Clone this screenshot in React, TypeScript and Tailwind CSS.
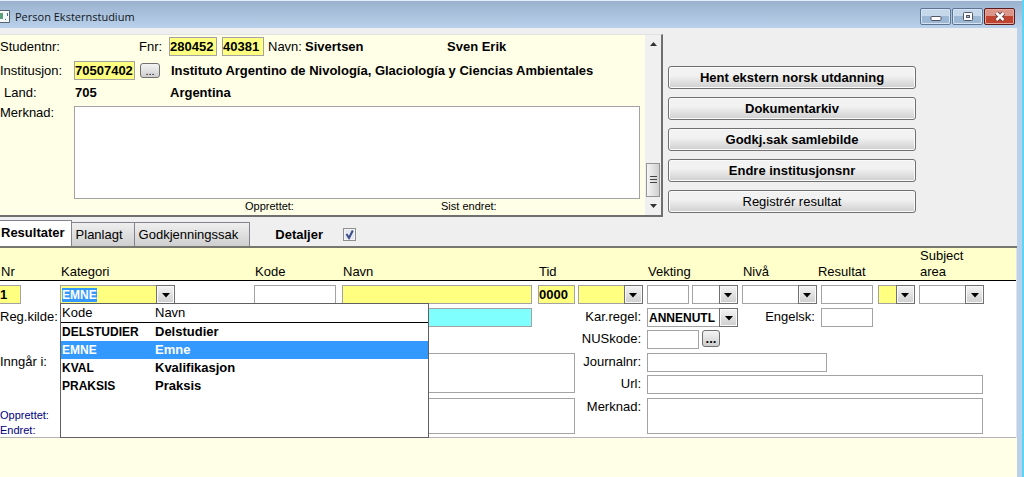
import React, { useEffect, useRef, useState } from 'react';
import { clsx } from 'clsx';

const ACTIONS = [
  { label: 'Hent ekstern norsk utdanning', bold: true },
  { label: 'Dokumentarkiv', bold: true },
  { label: 'Godkj.sak samlebilde', bold: true },
  { label: 'Endre institusjonsnr', bold: true },
  { label: 'Registrér resultat', bold: false },
];

const KATEGORIER = [
  { kode: 'DELSTUDIER', navn: 'Delstudier' },
  { kode: 'EMNE', navn: 'Emne' },
  { kode: 'KVAL', navn: 'Kvalifikasjon' },
  { kode: 'PRAKSIS', navn: 'Praksis' },
];

const TABS = ['Resultater', 'Planlagt', 'Godkjenningssak'];

const FIELD = 'block h-[19px] border border-[#a3a3a3] p-0 outline-none';

interface FieldProps extends React.InputHTMLAttributes<HTMLInputElement> {
  label: string;
}

const Field: React.FC<FieldProps> = ({ label, className, ...rest }) => (
  <input aria-label={label} className={clsx(FIELD, className)} {...rest} />
);

const Arrow = () => (
  <svg width="8" height="5" viewBox="0 0 8 5" className="mt-px">
    <path d="M0 0h8L4 4.5z" fill="#000" />
  </svg>
);

const ARROW_BOX =
  'flex h-[19px] w-[19px] shrink-0 items-center justify-center border border-[#707070] bg-linear-to-b from-[#f4f4f4] to-[#cfcfcf] shadow-[inset_0_0_0_1px_#fafafa]';

interface PickerProps {
  id?: string;
  label: string;
  value?: string;
  className?: string;
}

// Closed drop-down with the classic square arrow box
const Picker: React.FC<PickerProps> = ({ id, label, value = '', className }) => (
  <div className={clsx('relative flex', className)}>
    <select
      id={id}
      aria-label={label}
      defaultValue={value}
      className="h-[19px] min-w-0 flex-1 appearance-none border border-r-0 border-[#a3a3a3] py-0 pl-px text-xs leading-4 font-bold outline-none"
    >
      <option value={value}>{value}</option>
    </select>
    <span className={clsx(ARROW_BOX, 'pointer-events-none')}>
      <Arrow />
    </span>
  </div>
);

const DotsButton = ({ label, bold }: { label: string; bold?: boolean }) => (
  <button
    aria-label={label}
    className={clsx(
      'flex items-center justify-center rounded-[3px] border border-[#707070] bg-linear-to-b from-[#f4f4f4] to-[#cfcfcf] leading-3',
      bold ? 'h-[17px] w-[18px] font-bold' : 'h-[15px] w-5 text-[11px]'
    )}
  >
    ...
  </button>
);

const TitleBar = () => (
  <header className="flex h-7 shrink-0 items-center justify-between border-t border-[#e4eef8] bg-linear-to-b from-[#9ab2ce] to-[#b9d1ea] pt-1 pr-[7px]">
    <div className="flex items-center gap-[5px]">
      <svg width="10" height="13" viewBox="0 0 10 13">
        <path d="M0 .5h9.5v12H0" fill="#f4f8f8" stroke="#56646e" />
        <path d="M0 3h3v6H0z" fill="#5aa07c" />
        <path d="M5 9.500h1M7.500 3v3" stroke="#3f6f9a" />
      </svg>
      <h1 className="font-['Open_Sans','Noto_Sans',sans-serif] text-[11px] text-[#10161e]">Person Eksternstudium</h1>
    </div>
    <div className="flex gap-px">
      <button
        aria-label="Minimer"
        className="flex h-[17px] w-[31px] items-center justify-center rounded-[2px] border border-[#5b7593] bg-linear-to-b from-[#c5d7ea] from-50% to-[#9db8d5] to-50% shadow-[inset_0_0_0_1px_#d5e3f2]"
      >
        <svg width="12" height="11" viewBox="0 0 12 11">
          <rect x="1" y="5.500" width="10" height="4" rx="1" fill="#fff" stroke="#535666" />
        </svg>
      </button>
      <button
        aria-label="Maksimer"
        className="flex h-[17px] w-[31px] items-center justify-center rounded-[2px] border border-[#5b7593] bg-linear-to-b from-[#c5d7ea] from-50% to-[#9db8d5] to-50% shadow-[inset_0_0_0_1px_#d5e3f2]"
      >
        <svg width="12" height="11" viewBox="0 0 12 11">
          <rect x="1.500" y="1.500" width="9" height="8" rx="1" fill="#fff" stroke="#535666" />
          <rect x="4.500" y="4.500" width="3" height="2" fill="#a9c0da" stroke="#535666" />
        </svg>
      </button>
      <button
        aria-label="Lukk"
        className="flex h-[17px] w-[31px] items-center justify-center rounded-[2px] border border-[#5c1a1a] bg-linear-to-b from-[#dc9488] from-50% to-[#c0432f] to-50% shadow-[inset_0_0_0_1px_#e6a79c]"
      >
        <svg width="12" height="11" viewBox="0 0 12 11">
          <path d="M2.500 2l7 7M9.500 2l-7 7" stroke="#5b3a44" strokeWidth="4.500" />
          <path d="M2.500 2l7 7M9.500 2l-7 7" stroke="#fff" strokeWidth="2.500" />
        </svg>
      </button>
    </div>
  </header>
);

const Scrollbar = () => (
  <div className="flex w-4 shrink-0 flex-col items-center bg-[#f0f0f0] py-[7px]" aria-hidden="true">
    <svg width="7" height="4" viewBox="0 0 7 4">
      <path d="M0 4L3.500 0 7 4z" fill="#333" />
    </svg>
    <div className="mt-auto mb-[7px] flex h-[34px] w-[14px] items-center justify-center border border-[#959595] bg-linear-to-r from-[#f5f5f5] to-[#cfcfcf]">
      <svg width="7" height="8" viewBox="0 0 7 8">
        <path d="M0 .5h7M0 3.500h7M0 6.500h7" stroke="#444" />
      </svg>
    </div>
    <svg width="7" height="4" viewBox="0 0 7 4">
      <path d="M0 0h7L3.500 4z" fill="#333" />
    </svg>
  </div>
);

const PersonPanel = () => (
  <section className="flex h-[183px] w-[663px] shrink-0 border-t border-r-2 border-b-2 border-t-[#e2e2e2] border-r-[#6f6f6f] border-b-[#6f6f6f] bg-[#ffffe8]">
    <div className="flex min-w-0 flex-1 flex-col pt-[2px]">
      <div className="flex h-[19px] items-center">
        <span className="w-[139px]">Studentnr:</span>
        <label htmlFor="fnr" className="w-[30px]">Fnr:</label>
        <input id="fnr" defaultValue="280452" className={clsx(FIELD, 'mr-[5px] w-12 bg-[#ffff80] font-bold')} />
        <Field label="Personnr" defaultValue="40381" className="mr-1 w-[42px] bg-[#ffff80] font-bold" />
        <span className="w-[37px]">Navn:</span>
        <b className="w-[142px]">Sivertsen</b>
        <b>Sven Erik</b>
      </div>
      <div className="mt-[5px] flex h-[19px] items-center">
        <label htmlFor="institusjon" className="w-[74px]">Institusjon:</label>
        <input id="institusjon" defaultValue="70507402" className={clsx(FIELD, 'mr-[5px] w-[61px] bg-[#ffff80] font-bold')} />
        <DotsButton label="Velg institusjon" />
        <b className="ml-[11px] truncate">Instituto Argentino de Nivología, Glaciología y Ciencias Ambientales</b>
      </div>
      <div className="mt-1 flex h-[18px] items-center">
        <span className="w-[75px] pl-1">Land:</span>
        <b className="w-[95px]">705</b>
        <b>Argentina</b>
      </div>
      <div className="mt-1 flex">
        <label htmlFor="merknad" className="w-[74px] leading-[14px]">Merknad:</label>
        <textarea id="merknad" className="mr-[5px] block h-[93px] min-w-0 flex-1 resize-none border border-[#a3a3a3] bg-white outline-none" />
      </div>
      <div className="flex text-[11px] leading-[14px]">
        <span className="ml-[245px] w-[196px]">Opprettet:</span>
        <span>Sist endret:</span>
      </div>
    </div>
    <Scrollbar />
  </section>
);

const TabBar = () => {
  const [active, setActive] = useState('Resultater');
  return (
    <div className="flex items-end border-b-2 border-[#77776f]">
      <div role="tablist" className="flex items-end">
        {TABS.map((tab) => (
          <button
            key={tab}
            role="tab"
            aria-selected={tab === active}
            onClick={() => setActive(tab)}
            className={clsx(
              'border-t border-r border-[#84848c]',
              tab === active
                ? 'h-[26px] bg-white pr-[6px] pb-[2px] pl-px font-bold'
                : 'h-6 bg-linear-to-b from-[#efefef] to-[#cfcfcf] pr-[11px] pl-1'
            )}
          >
            {tab}
          </button>
        ))}
      </div>
      <label htmlFor="detaljer" className="ml-[25px] h-5 font-bold">Detaljer</label>
      <span className="relative mb-[5px] ml-5 h-[13px] w-[13px]">
        <input
          id="detaljer"
          type="checkbox"
          defaultChecked
          className="peer block h-[13px] w-[13px] appearance-none border border-[#8e8f8f] bg-[#e3e8f0] shadow-[inset_0_0_0_1px_#f4f4f4]"
        />
        <svg viewBox="0 0 13 13" className="pointer-events-none absolute inset-0 hidden peer-checked:block">
          <path d="M3.500 6l2.500 4L9.800 2.500" fill="none" stroke="#3a4b86" strokeWidth="2" />
        </svg>
      </span>
    </div>
  );
};

const KategoriBox = () => {
  const input = useRef<HTMLInputElement>(null);
  const [selected, setSelected] = useState('EMNE');

  useEffect(() => {
    input.current?.focus();
    input.current?.select();
  }, []);

  return (
    <div className="relative flex">
      <input
        ref={input}
        role="combobox"
        aria-label="Kategori"
        aria-expanded="true"
        aria-controls="kategorier"
        value={selected}
        onChange={(e) => setSelected(e.target.value)}
        className="block h-[19px] w-24 border border-r-0 border-[#a3a3a3] bg-[#ffff80] p-0 pl-px text-xs leading-4 font-bold outline-none selection:bg-[#3399ff] selection:text-white"
      />
      <button aria-label="Vis kategorier" className={ARROW_BOX}>
        <Arrow />
      </button>
      <div className="absolute top-[18px] left-0 z-10 h-[135px] w-[369px] border border-[#606060] bg-white">
        <div className="flex h-[19px] border-b border-black pl-px text-[13px] leading-[18px]">
          <span className="w-[93px]">Kode</span>
          <span>Navn</span>
        </div>
        <ul id="kategorier" role="listbox" aria-label="Kategorier">
          {KATEGORIER.map(({ kode, navn }) => (
            <li
              key={kode}
              role="option"
              aria-selected={kode === selected}
              onClick={() => setSelected(kode)}
              className={clsx(
                'flex h-[18px] items-center pl-px font-bold',
                kode === selected && 'bg-[#3399ff] text-white'
              )}
            >
              <span className="w-[93px] text-xs">{kode}</span>
              <span>{navn}</span>
            </li>
          ))}
        </ul>
      </div>
    </div>
  );
};

const ResultTable = () => (
  <table className="w-full table-fixed border-collapse text-left">
    <colgroup>
      <col className="w-[60px]" />
      <col className="w-[194px]" />
      <col className="w-[88px]" />
      <col />
      <col className="w-10" />
      <col className="w-[69px]" />
      <col className="w-[45px]" />
      <col className="w-[50px]" />
      <col className="w-[79px]" />
      <col className="w-[57px]" />
      <col className="w-[41px]" />
      <col className="w-[97px]" />
    </colgroup>
    <thead>
      <tr className="border-b border-black bg-[#ffffcc] align-bottom leading-4 [&>th]:p-0 [&>th]:pl-px [&>th]:font-normal">
        <th>Nr</th>
        <th>Kategori</th>
        <th>Kode</th>
        <th>Navn</th>
        <th colSpan={2}>Tid</th>
        <th colSpan={2}>Vekting</th>
        <th>Nivå</th>
        <th colSpan={2}><span className="-ml-1">Resultat</span></th>
        <th>Subject<br />area</th>
      </tr>
    </thead>
    <tbody>
      <tr className="align-top [&>td]:p-0 [&>td]:pt-1">
        <td><Field label="Nr" defaultValue="1" className="w-[21px] border-l-0 bg-[#ffff80] font-bold" /></td>
        <td><KategoriBox /></td>
        <td><Field label="Kode" className="w-[82px]" /></td>
        <td><Field label="Navn" className="w-[calc(100%-6px)] bg-[#ffff80]" /></td>
        <td><Field label="Tid" defaultValue="0000" className="w-[37px] bg-[#ffff80] font-bold" /></td>
        <td><Picker label="Termin" className="w-[65px] bg-[#ffff80]" /></td>
        <td><Field label="Vekting" className="w-[42px]" /></td>
        <td><Picker label="Vektingstype" className="w-[46px]" /></td>
        <td><Picker label="Nivå" className="w-[75px]" /></td>
        <td><Field label="Resultat" className="w-[52px]" /></td>
        <td><Picker label="Resultattype" className="w-[37px] bg-[#ffff80]" /></td>
        <td><Picker label="Subject area" className="w-[65px]" /></td>
      </tr>
    </tbody>
  </table>
);

const Details = () => (
  <div className="flex border-b border-[#b4b4b4] pt-1 pb-[3px]">
    <div className="grid min-w-0 flex-1 grid-cols-[60px_1fr] grid-rows-[45px_45px_36px]">
      <label htmlFor="regkilde">Reg.kilde:</label>
      <input id="regkilde" className={clsx(FIELD, 'w-[calc(100%-43px)] bg-[#80ffff]')} />
      <label htmlFor="inngar">Inngår i:</label>
      <textarea id="inngar" className="block h-10 resize-none border border-[#a3a3a3] outline-none" />
      <div className="pt-[10px] text-[11px] leading-[15px] text-[#000080]">
        <p>Opprettet:</p>
        <p>Endret:</p>
      </div>
      <textarea aria-label="Tillegg" className="block h-9 resize-none border border-[#a3a3a3] outline-none" />
    </div>
    <div className="grid w-[441px] shrink-0 grid-cols-[72px_1fr] grid-rows-[22px_23px_22px_23px_36px] [&>label]:pr-[6px] [&>label]:text-right">
      <label htmlFor="karregel">Kar.regel:</label>
      <div className="flex">
        <Picker id="karregel" label="Kar.regel" value="ANNENUTL" className="w-[91px]" />
        <label htmlFor="engelsk" className="w-[83px] pr-[6px] text-right">Engelsk:</label>
        <input id="engelsk" className={clsx(FIELD, 'w-[52px]')} />
      </div>
      <label htmlFor="nuskode">NUSkode:</label>
      <div className="flex items-start gap-[3px]">
        <input id="nuskode" className={clsx(FIELD, 'w-[52px]')} />
        <DotsButton label="Velg NUSkode" bold />
      </div>
      <label htmlFor="journalnr">Journalnr:</label>
      <input id="journalnr" className={clsx(FIELD, 'w-[180px]')} />
      <label htmlFor="url">Url:</label>
      <input id="url" className={clsx(FIELD, 'mr-[33px]')} />
      <label htmlFor="resmerknad">Merknad:</label>
      <textarea id="resmerknad" className="mr-[33px] block h-9 resize-none border border-[#a3a3a3] outline-none" />
    </div>
  </div>
);

export default function App() {
  return (
    <div className="flex min-h-screen overflow-hidden font-['Liberation_Sans',Arial,sans-serif] text-[13px] leading-[18px] text-black">
      <div className="flex min-w-0 flex-1 flex-col bg-[#b9d1ea]">
        <TitleBar />
        <main className="mr-[5px] flex flex-1 flex-col bg-[#efefef]">
          <div className="flex gap-[5px] pt-[6px]">
            <PersonPanel />
            <div className="flex w-[248px] flex-col gap-2 pt-8">
              {ACTIONS.map(({ label, bold }) => (
                <button
                  key={label}
                  className={clsx(
                    'h-[23px] rounded-[3px] border border-[#707070] bg-linear-to-b from-[#f2f2f2] from-40% to-[#cfcfcf] shadow-[inset_0_0_0_1px_#fafafa]',
                    bold && 'font-bold'
                  )}
                >
                  {label}
                </button>
              ))}
            </div>
          </div>
          <div className="pt-[3px]">
            <TabBar />
          </div>
          <section className="border-r border-[#e4e4ea] bg-white">
            <ResultTable />
            <Details />
          </section>
          <div className="flex-1 bg-[#ffffe8]" />
        </main>
      </div>
      <div className="w-[2px] shrink-0 bg-[#5fd3f3]" />
    </div>
  );
}
